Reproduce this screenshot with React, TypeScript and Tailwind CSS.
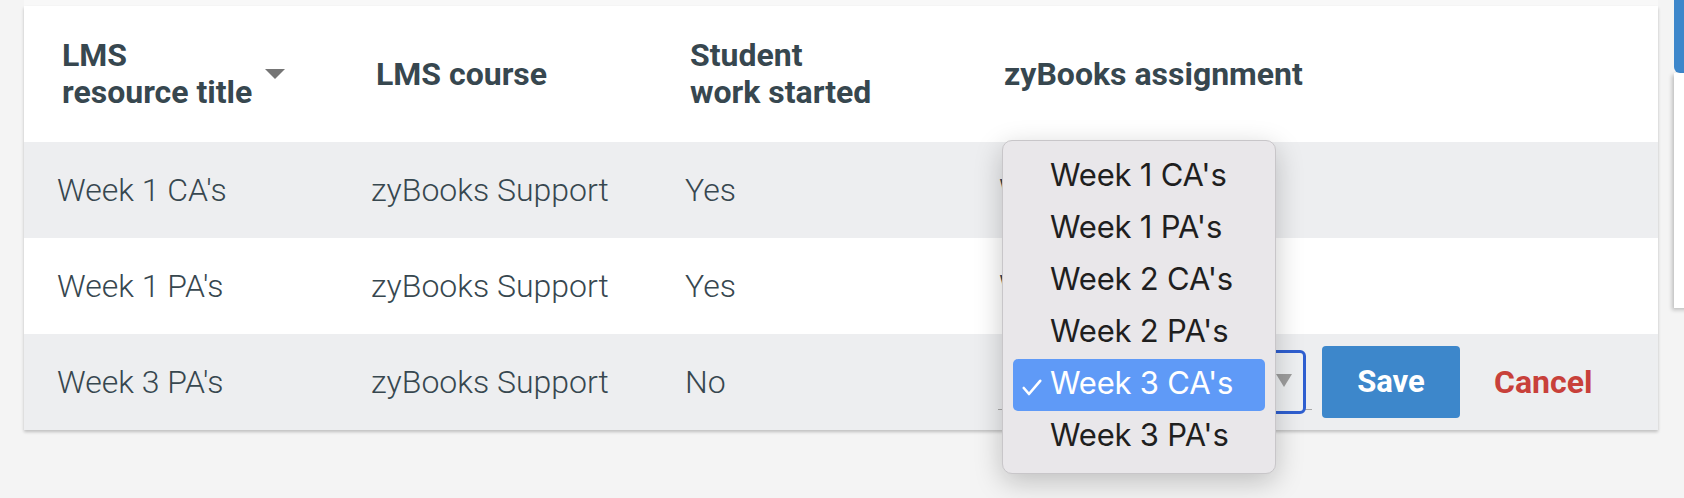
import React from 'react';

interface Row {
  title: string;
  course: string;
  started: string;
  assignment: string;
  editing?: boolean;
}

const rows: Row[] = [
  { title: "Week 1 CA's", course: 'zyBooks Support', started: 'Yes', assignment: "Week 1 CA's" },
  { title: "Week 1 PA's", course: 'zyBooks Support', started: 'Yes', assignment: "Week 1 PA's" },
  { title: "Week 3 PA's", course: 'zyBooks Support', started: 'No', assignment: "Week 3 CA's", editing: true },
];

const options = ["Week 1 CA's", "Week 1 PA's", "Week 2 CA's", "Week 2 PA's", "Week 3 CA's", "Week 3 PA's"];
const selected = "Week 3 CA's";

const SelectMenu: React.FC = () => (
  <div className="absolute left-[978px] top-[134px] w-[274px] p-[10px] rounded-[10px] bg-[#e9e7ea] border border-[#c8c6c9] shadow-[0_8px_28px_rgba(0,0,0,0.22)] font-['Inter',sans-serif] text-[31px] text-[#1f1f1f] z-10">
    {options.map((opt) => {
      const isSel = opt === selected;
      return (
        <div
          key={opt}
          className={`relative h-[52px] flex items-center pl-[37px] rounded-[5px] ${isSel ? 'bg-[#5f9af7] text-white' : ''}`}
        >
          {isSel && (
            <svg className="absolute left-[9px] top-[20px]" width="20" height="17" viewBox="0 0 20 17">
              <polyline points="1.8,9 7,15 18.2,1.8" fill="none" stroke="white" strokeWidth="2.6" strokeLinecap="round" strokeLinejoin="round" />
            </svg>
          )}
          <span className="-mt-[3px] tracking-[-0.2px]">{opt}</span>
        </div>
      );
    })}
  </div>
);

export default function App() {
  return (
    <div className="w-[1684px] h-[498px] overflow-hidden bg-[#f4f4f4] flex font-['Roboto',sans-serif] text-[#37474f]">
      <div className="ml-[24px] w-[1634px] shrink-0 flex flex-col">
        <div className="h-[6px] bg-[#f8f8f8]" />
        <div className="relative bg-white shadow-[0_2px_3px_rgba(0,0,0,0.22)]">
          {/* header */}
          <div className="grid grid-cols-[314px_314px_314px_1fr] h-[136px] font-bold text-[32px] leading-[37px]">
            <div className="flex items-center pl-[38px]">
              <div>
                LMS
                <br />
                resource title
              </div>
              <svg className="ml-[13px]" width="20" height="10" viewBox="0 0 20 10">
                <polygon points="0,0 20,0 10,10" fill="#757575" />
              </svg>
            </div>
            <div className="flex items-center pl-[38px]">LMS course</div>
            <div className="flex items-center pl-[38px]">
              <div>
                Student
                <br />
                work started
              </div>
            </div>
            <div className="flex items-center pl-[38px]">zyBooks assignment</div>
          </div>

          {/* rows */}
          {rows.map((r, i) => (
            <div
              key={r.title}
              className={`grid grid-cols-[314px_314px_314px_1fr] h-[96px] text-[32px] font-light ${i % 2 === 0 ? 'bg-[#edeef0]' : 'bg-white'}`}
            >
              <div className="flex items-center pl-[33px]">{r.title}</div>
              <div className="flex items-center pl-[33px]">{r.course}</div>
              <div className="flex items-center pl-[33px]">{r.started}</div>
              {r.editing ? (
                <div className="flex items-center pl-[32px]">
                  <div className="relative w-[314px] h-[64px]">
                    <div className="absolute left-0 right-0 bottom-[4px] h-px bg-[#a8a8a8]" />
                    <div className="absolute top-0 right-[6px] w-[290px] h-[64px] border-[3px] border-[#2f5fd0] rounded-[6px] bg-[#eef0f2]">
                      <svg className="absolute right-[11px] top-[21px]" width="16" height="13" viewBox="0 0 16 13">
                        <polygon points="0,0 16,0 8,13" fill="#9e9e9e" />
                      </svg>
                    </div>
                  </div>
                  <button className="ml-[10px] w-[138px] h-[72px] rounded-[4px] bg-[#3d87cb] text-white font-bold text-[31px]">
                    Save
                  </button>
                  <button className="ml-[34px] text-[#c8403a] font-bold text-[32px]">Cancel</button>
                </div>
              ) : (
                <div className="flex items-center pl-[33px]">{r.assignment}</div>
              )}
            </div>
          ))}

          <SelectMenu />
        </div>
      </div>

      <div className="ml-[16px] w-[40px] shrink-0 flex flex-col">
        <div className="h-[73px] bg-[#3d87cb] rounded-bl-[6px]" />
        <div className="h-[235px] bg-white shadow-[-2px_2px_4px_rgba(0,0,0,0.22)]" />
      </div>
    </div>
  );
}
